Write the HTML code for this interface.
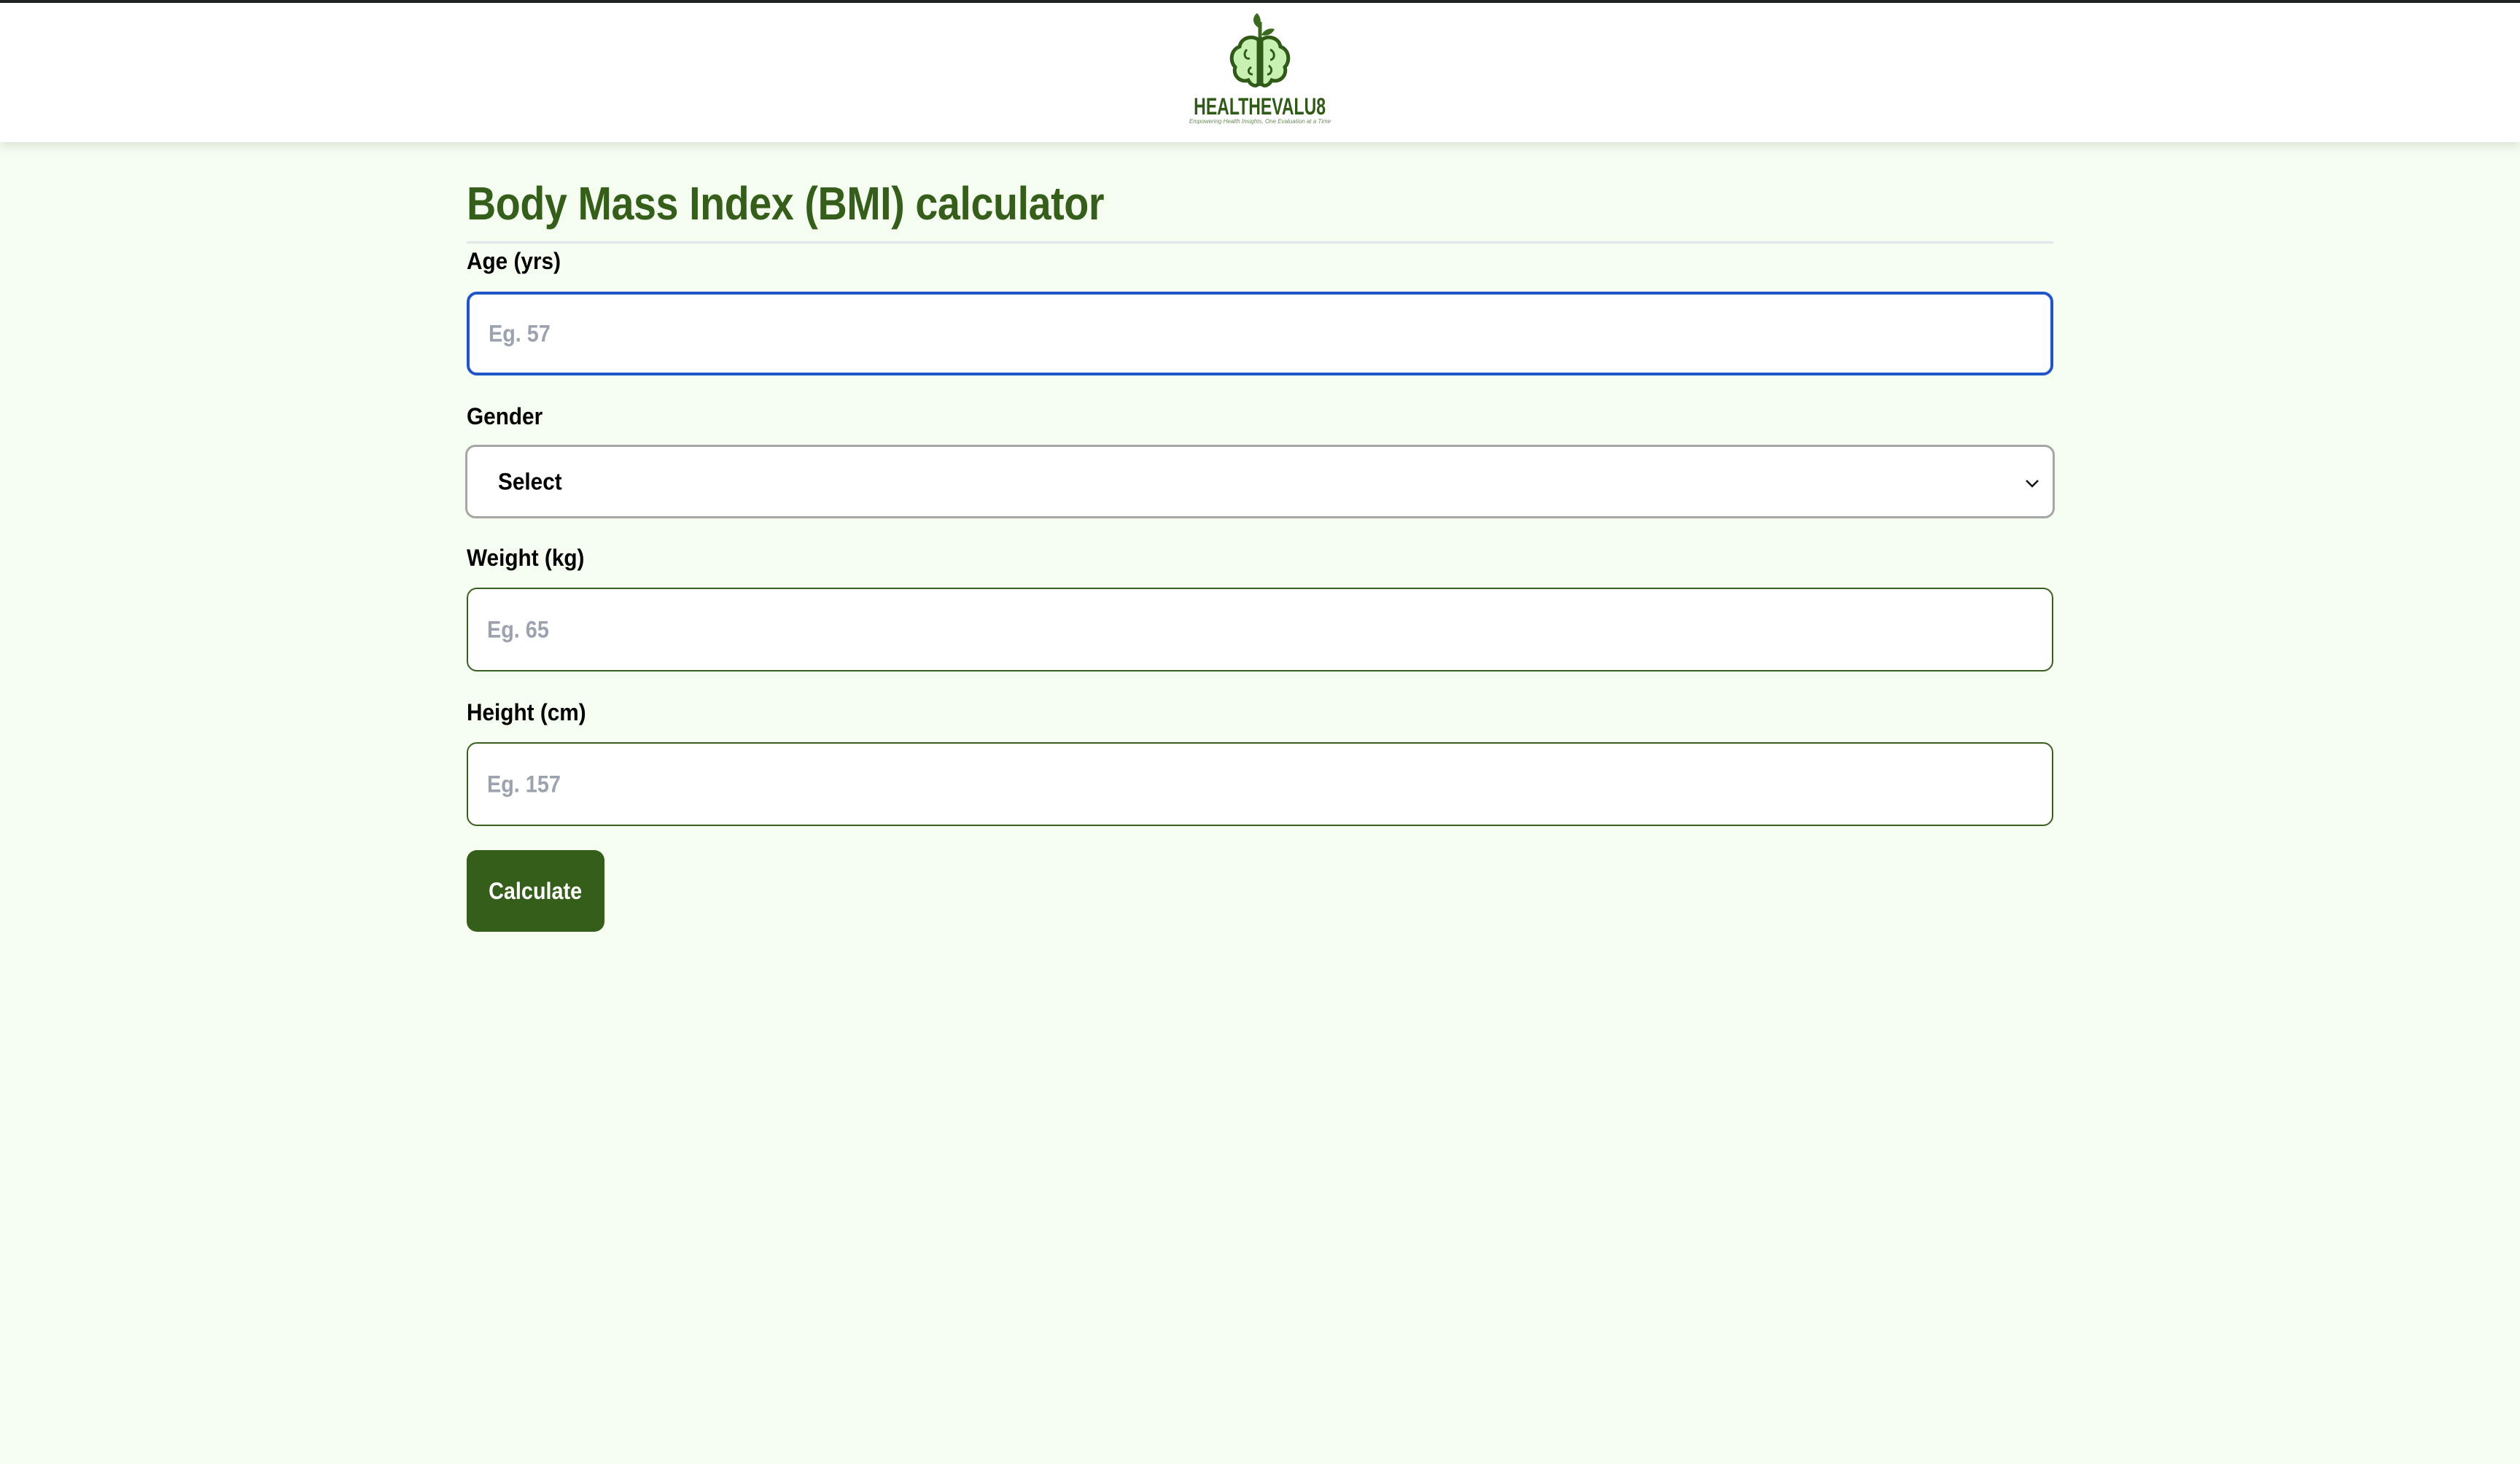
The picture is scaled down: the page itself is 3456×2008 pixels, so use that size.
<!DOCTYPE html>
<html><head><meta charset="utf-8"><style>
*{box-sizing:border-box;margin:0;padding:0}
body{width:3456px;height:2008px;background:#f5fdf1;font-family:"Liberation Sans",sans-serif;position:relative;overflow:hidden}
.top{position:absolute;left:0;top:0;width:3456px;height:4px;background:#202526}
.hdr{position:absolute;left:0;top:4px;width:3456px;height:191px;background:#fff;box-shadow:0 4px 14px rgba(0,0,0,0.12)}
.abs{position:absolute}
.cond{display:inline-block;transform-origin:left center;white-space:nowrap}
h1{position:absolute;left:640px;top:242px;font-size:64px;color:#355e1a;font-weight:bold;transform:scaleX(0.87);transform-origin:left top;white-space:nowrap;letter-spacing:-0.5px}
.hr{position:absolute;left:640px;top:331px;width:2176px;height:3px;background:#e3e6e8}
.lbl{position:absolute;left:640px;font-size:32px;font-weight:bold;color:#000;transform:scaleX(0.93);transform-origin:left top;white-space:nowrap}
.inp{position:absolute;left:640px;width:2176px;height:115px;background:#fff;border:2px solid #3a6020;border-radius:14px}
.ph{position:absolute;left:26px;top:50%;transform:translateY(-50%) scaleX(0.9);transform-origin:left center;font-size:32px;font-weight:bold;color:#9ca3af;white-space:nowrap}
</style></head><body>
<div class="top"></div>
<div class="hdr">
<svg class="abs" style="left:1680px;top:14px" width="96" height="110" viewBox="0 0 96 110">
<path d="M48 12 L48 100" stroke="#3b6a1f" stroke-width="5"/>
<path d="M46 20 C36 14 38 4 44 0 C50 6 50 14 46 20Z" fill="#3b6a1f"/>
<path d="M50 30 C54 22 62 20 68 22 C64 30 56 32 50 30Z" fill="#3b6a1f"/>
<path d="M45 36 C36 30 22 34 20 46 C8 50 6 66 14 74 C10 86 22 96 32 92 C36 100 44 102 46 96 L46 36Z" fill="#c9f0b3" stroke="#2f5a17" stroke-width="5"/>
<path d="M51 36 C60 30 74 34 76 46 C88 50 90 66 82 74 C86 86 74 96 64 92 C60 100 52 102 50 96 L50 36Z" fill="#c9f0b3" stroke="#2f5a17" stroke-width="5"/>
<path d="M30 50 C24 56 28 64 34 62 M62 50 C70 54 68 64 62 64 M36 74 C30 78 32 84 38 84 M60 72 C66 76 64 84 58 84" stroke="#2f5a17" stroke-width="3" fill="none"/>
</svg>
<div class="abs" style="left:1528px;top:124px;width:400px;text-align:center;font-size:32px;font-weight:bold;color:#2f5a17"><span class="cond" style="transform:scaleX(0.72);transform-origin:center">HEALTHEVALU8</span></div>
<div class="abs" style="left:1528px;top:158px;width:400px;text-align:center;font-size:8px;color:#6b8b5a;font-style:italic;white-space:nowrap">Empowering Health Insights, One Evaluation at a Time</div>
</div>
<h1>Body Mass Index (BMI) calculator</h1>
<div class="hr"></div>
<div class="lbl" style="top:340px">Age (yrs)</div>
<div class="inp" style="top:400px;border:4px solid #1f55c9"><div class="ph">Eg. 57</div></div>
<div class="lbl" style="top:553px">Gender</div>
<div class="inp" style="top:610px;left:638px;width:2180px;height:101px;border:3px solid #a6a6a6;border-radius:14px">
<div class="abs" style="left:42px;top:50%;transform:translateY(-50%) scaleX(0.93);transform-origin:left center;font-size:32px;font-weight:bold;color:#000">Select</div>
<svg class="abs" style="left:2136px;top:44px" width="20" height="12" viewBox="0 0 20 12"><path d="M2 2 L10 10 L18 2" stroke="#111" stroke-width="2.5" fill="none"/></svg>
</div>
<div class="lbl" style="top:747px">Weight (kg)</div>
<div class="inp" style="top:806px"><div class="ph">Eg. 65</div></div>
<div class="lbl" style="top:959px">Height (cm)</div>
<div class="inp" style="top:1018px"><div class="ph">Eg. 157</div></div>
<div class="abs" style="left:640px;top:1166px;width:189px;height:112px;background:#355e1a;border-radius:14px;color:#fff;font-size:32px;font-weight:bold;text-align:center;line-height:112px"><span class="cond" style="transform:scaleX(0.9);transform-origin:center">Calculate</span></div>
</body></html>
